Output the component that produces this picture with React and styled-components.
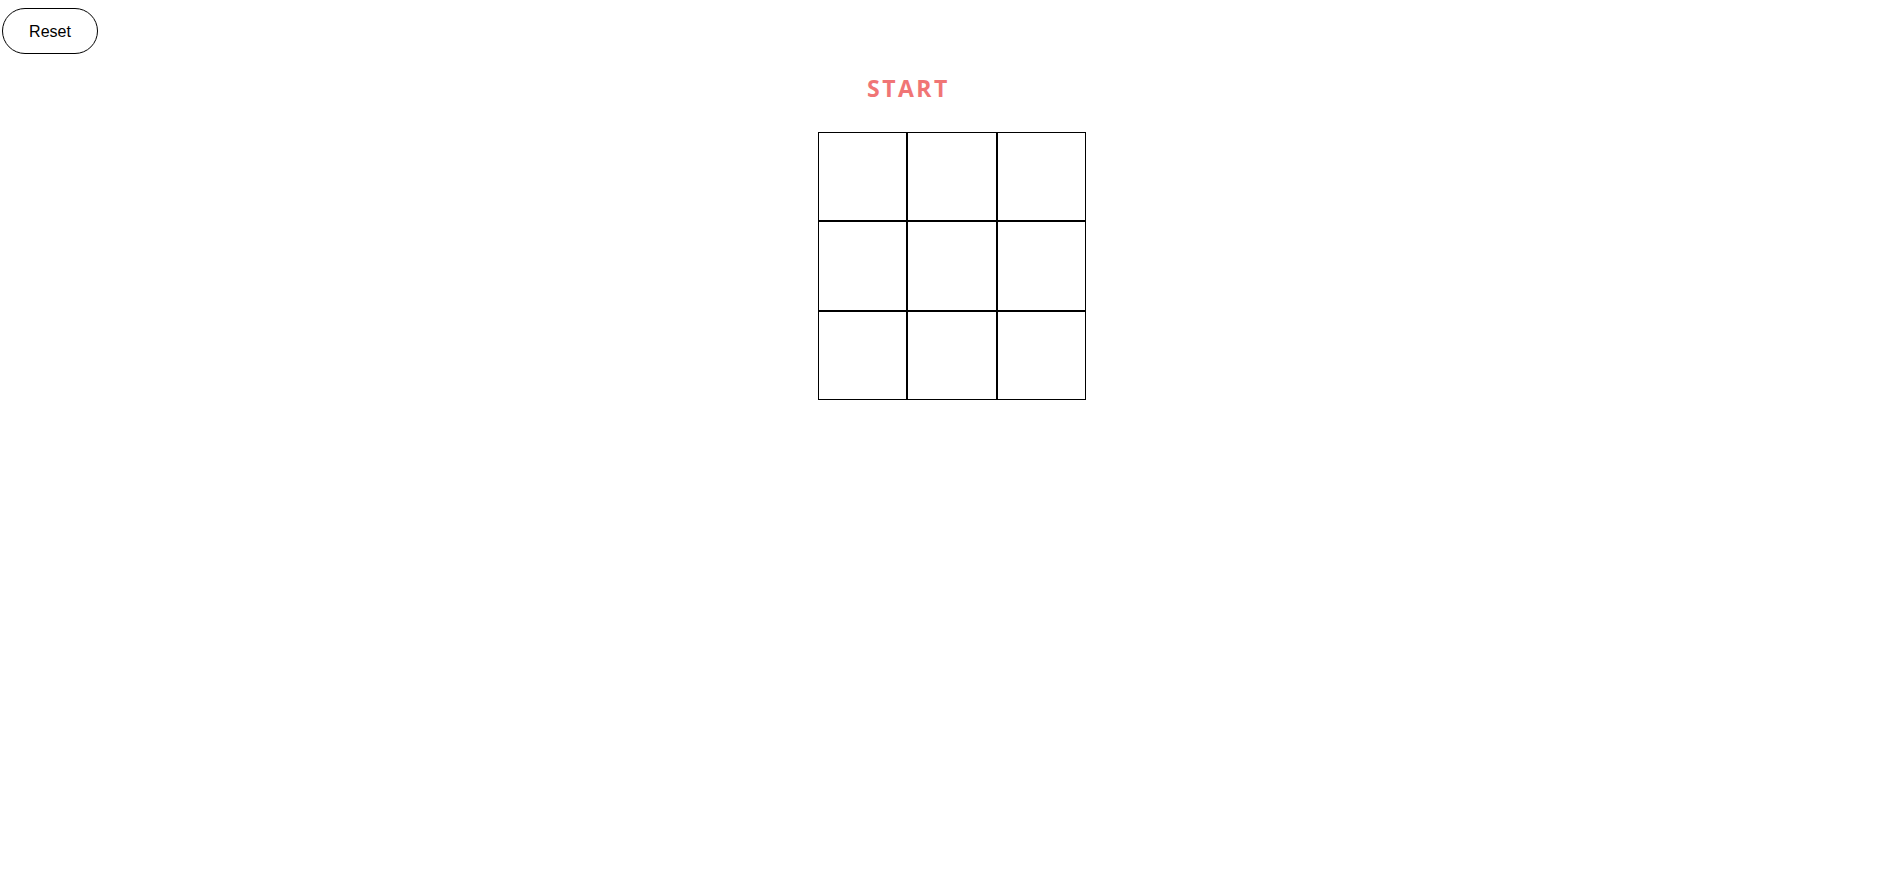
import React from 'react'
import styled, { createGlobalStyle } from 'styled-components'

const GlobalStyle = createGlobalStyle`
  body {
    margin: 0;
    background: #fff;
    font-family: "Liberation Sans", Arial, sans-serif;
  }
`

const App = () => {
  const cells = Array.from({ length: 9 })
  return (
    <>
      <GlobalStyle />
      <Page>
        <ResetButton>Reset</ResetButton>
        <Board>
          <Status>START</Status>
          <Grid>
            {cells.map((_, i) => (
              <Cell key={i} />
            ))}
          </Grid>
        </Board>
      </Page>
    </>
  )
}

export default App

const Page = styled.div`
  display: flex;
  flex-direction: column;
`

const ResetButton = styled.button`
  margin: 8px 0 0 2px;
  padding: 2px 0 0;
  width: 96px;
  height: 46px;
  border: 1px solid #000;
  border-radius: 23px;
  background: #fff;
  color: #000;
  font-family: "Liberation Sans", Arial, sans-serif;
  font-size: 16px;
  cursor: pointer;
`

const Board = styled.div`
  width: 268px;
  margin: 17px 0 0 818px;
  display: flex;
  flex-direction: column;
`

const Status = styled.h2`
  margin: 1px 0 28px 49px;
  height: 32px;
  line-height: 32px;
  color: #f07575;
  font-family: "Comic Sans MS", "Open Sans", sans-serif;
  font-weight: 700;
  font-size: 23px;
  letter-spacing: 2.5px;
`

const Grid = styled.div`
  display: grid;
  grid-template-columns: repeat(3, 1fr);
  grid-auto-rows: 89.33px;
`

const Cell = styled.div`
  box-sizing: border-box;
  border: 1px solid #000;
  background: #fff;
`
